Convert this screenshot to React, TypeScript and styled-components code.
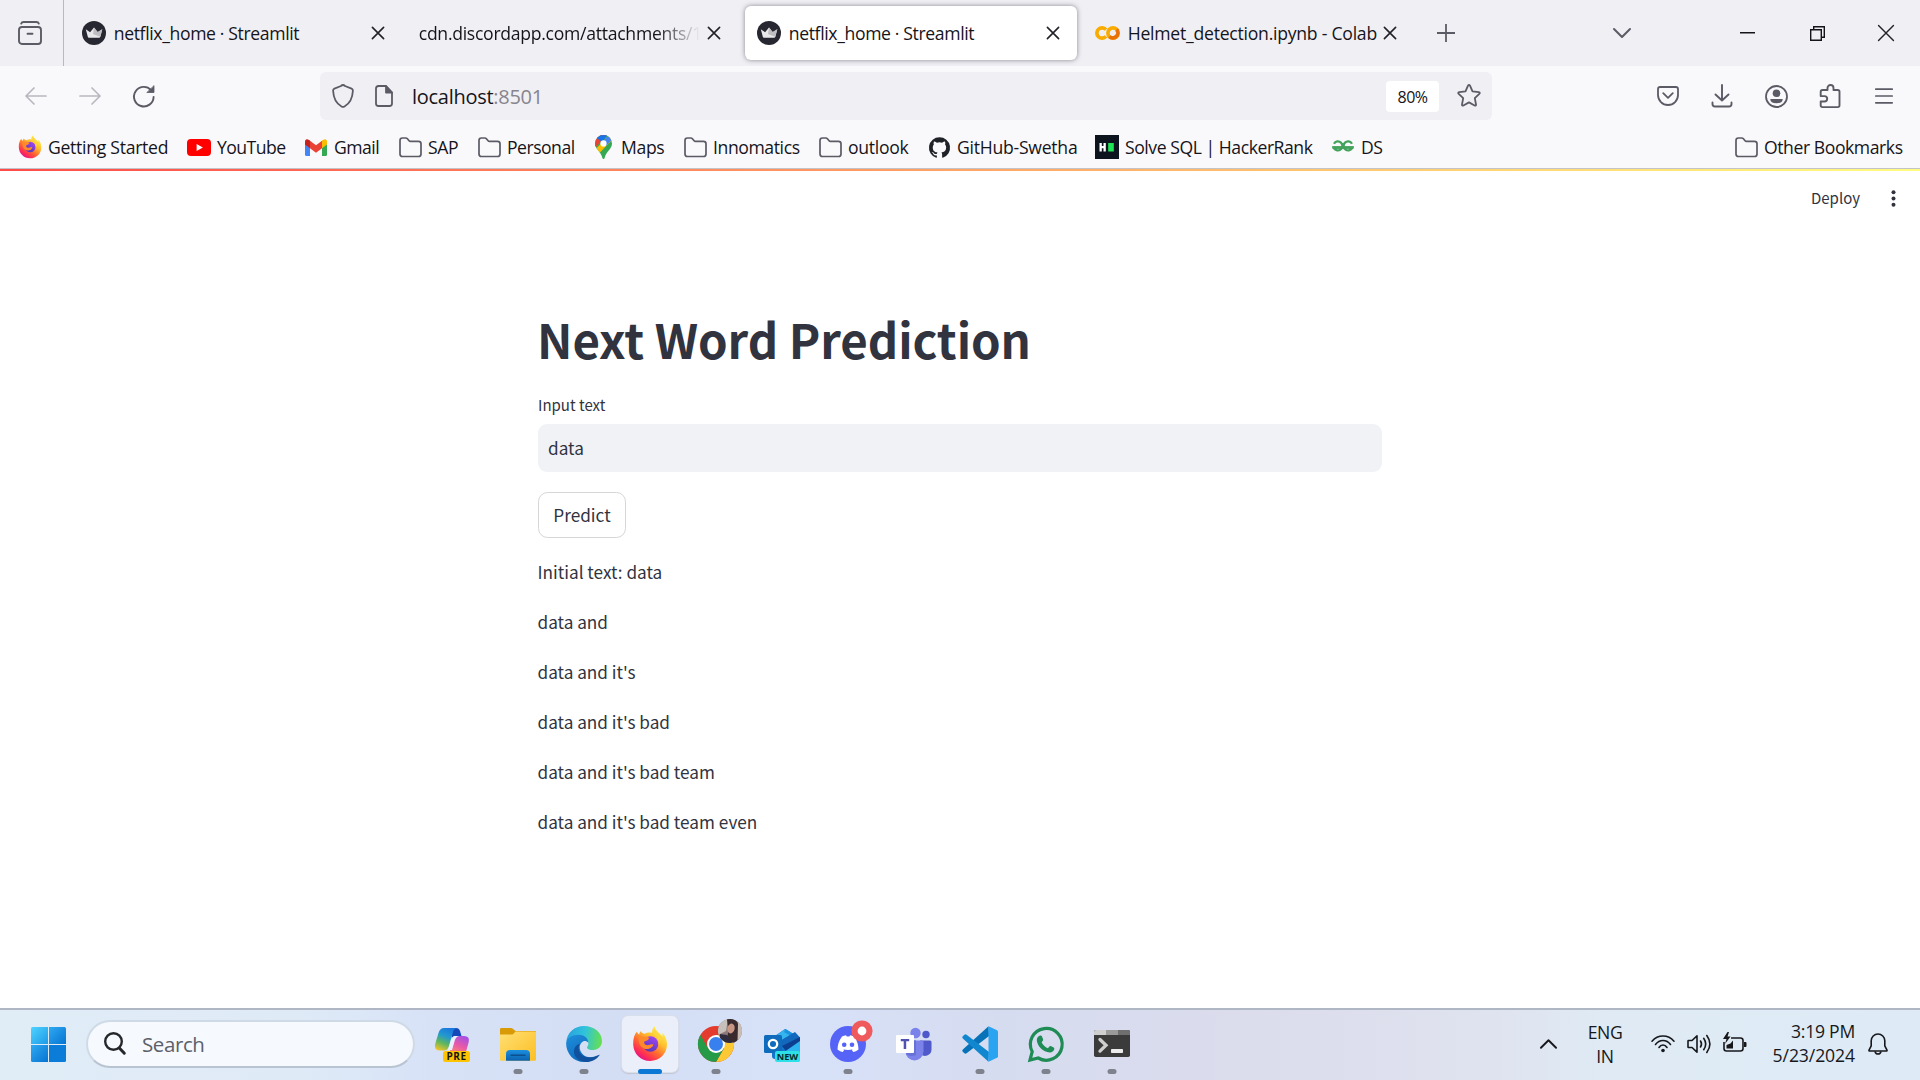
import React from "react";
import styled, { createGlobalStyle, css } from "styled-components";

const Global = createGlobalStyle`
  *, *::before, *::after { box-sizing: border-box; }
  html, body { margin: 0; padding: 0; width: 1920px; height: 1080px; overflow: hidden; background: #fff; }
  svg { display: block; flex: none; overflow: visible; }
`;

const ui = `"Open Sans", "Noto Sans", sans-serif`;
const source = `"Noto Sans CJK SC", "Noto Sans", sans-serif`;

const Screen = styled.div`
  display: flex;
  flex-direction: column;
  width: 1920px;
  height: 1080px;
  overflow: hidden;
  background: #fff;
  font-family: ${ui};
  font-size: 18px;
  color: #15141a;
`;

/* ---------- text ---------- */
const Label = styled.span<{ $track?: number; $size?: number }>`
  font-size: ${(p) => p.$size ?? 17.6}px;
  letter-spacing: ${(p) => p.$track ?? -0.4}px;
  line-height: 24px;
  white-space: nowrap;
`;

/* ---------- tab strip ---------- */
const TabStrip = styled.header`
  display: flex;
  align-items: center;
  height: 66px;
  flex: none;
  background: #f0eff4;
`;
const ViewButton = styled.div`
  display: flex;
  align-items: center;
  width: 64px;
  height: 66px;
  padding-left: 18px;
  border-right: 1px solid #b9b8bf;
`;
const Tab = styled.div<{ $w: number; $ml: number; $active?: boolean; $pr?: number }>`
  display: flex;
  align-items: center;
  gap: 8px;
  flex: none;
  width: ${(p) => p.$w}px;
  height: 54px;
  margin-left: ${(p) => p.$ml}px;
  padding: 0 ${(p) => p.$pr ?? 16}px 0 12px;
  border-radius: 6px;
  ${(p) =>
    p.$active &&
    css`
      background: #fff;
      box-shadow: 0 0 5px rgba(50, 50, 60, 0.55);
    `}
`;
const TabTitle = styled.div<{ $fade?: boolean }>`
  flex: 1;
  display: flex;
  min-width: 0;
  ${(p) =>
    p.$fade &&
    css`
      mask-image: linear-gradient(to right, #000 calc(100% - 44px), transparent 100%);
    `}
`;
const StripButton = styled.div<{ $w: number; $ml?: number }>`
  display: flex;
  justify-content: center;
  align-items: center;
  width: ${(p) => p.$w}px;
  height: 66px;
  margin-left: ${(p) => p.$ml ?? 0}px;
`;

/* ---------- navigation ---------- */
const NavBar = styled.div`
  display: flex;
  align-items: center;
  flex: none;
  height: 60px;
  padding: 0 9px 0 9px;
  background: #f9f9fb;
`;
const NavButton = styled.div`
  display: flex;
  justify-content: center;
  align-items: center;
  width: 54px;
  height: 48px;
`;
const UrlBar = styled.div`
  display: flex;
  align-items: center;
  width: 1172px;
  height: 48px;
  margin-left: 149px;
  padding: 0 11px 0 10px;
  border-radius: 6px;
  background: #f0eff4;
`;
const UrlIcon = styled.div<{ $w: number }>`
  display: flex;
  justify-content: center;
  width: ${(p) => p.$w}px;
`;
const Url = styled.div`
  flex: 1;
  padding-top: 2px;
  font-size: 20px;
  letter-spacing: -0.28px;
  line-height: 28px;
  white-space: nowrap;
`;
const Dim = styled.span`
  color: #86858c;
`;
const ZoomBadge = styled.div`
  display: flex;
  align-items: center;
  justify-content: center;
  width: 53px;
  height: 31px;
  padding-top: 1px;
  margin-right: 18px;
  border-radius: 4px;
  background: #fff;
`;
const NavRight = styled.div`
  display: flex;
  margin-left: auto;
`;

/* ---------- bookmarks ---------- */
const Bookmarks = styled.div`
  display: flex;
  align-items: center;
  flex: none;
  height: 42px;
  padding: 0 0 0 18px;
  background: #f9f9fb;
`;
const Bookmark = styled.div<{ $w: number }>`
  display: flex;
  align-items: center;
  gap: 6px;
  flex: none;
  width: ${(p) => p.$w}px;
`;
const IconBox = styled.div`
  display: flex;
  justify-content: center;
  align-items: center;
  flex: none;
  width: 24px;
  height: 24px;
`;

/* ---------- page ---------- */
const Page = styled.main`
  display: flex;
  flex-direction: column;
  flex: 1;
  border-top: 1px solid #c4c4c8;
  font-family: ${source};
  color: #31333f;
  background: #fff;
`;
const Decoration = styled.div`
  height: 2px;
  flex: none;
  background: linear-gradient(90deg, #ff4b4b, #fffd80);
`;
const PageHeader = styled.div`
  display: flex;
  justify-content: flex-end;
  align-items: center;
  gap: 31px;
  height: 54px;
  padding-right: 24px;
  font-size: 15px;
  line-height: 24px;
`;
const Content = styled.section`
  display: flex;
  flex-direction: column;
  align-items: flex-start;
  width: 844px;
  margin: 0 auto;
  padding-top: 82px;
`;
const Title = styled.h1`
  margin: 0;
  height: 64px;
  font-size: 47.4px;
  font-weight: 700;
  letter-spacing: -0.08px;
  line-height: 64px;
  text-indent: -1px;
  white-space: nowrap;
`;
const FieldLabel = styled.label`
  margin-top: 22px;
  height: 31px;
  font-size: 15px;
  line-height: 24px;
`;
const Field = styled.div`
  display: flex;
  align-items: center;
  align-self: stretch;
  height: 48px;
  padding: 0 10px 1px;
  border-radius: 9px;
  background: #f0f2f6;
  font-size: 17.2px;
`;
const Button = styled.button`
  width: 88px;
  height: 46px;
  margin: 20px 0 18px;
  padding: 0 0 1px;
  border: 1px solid #d6d6d8;
  border-radius: 9.6px;
  background: #fff;
  color: inherit;
  font-family: inherit;
  font-size: 17.2px;
`;
const Lines = styled.div`
  display: flex;
  flex-direction: column;
  gap: 19px;
`;
const Line = styled.p`
  margin: 0;
  font-size: 17.2px;
  line-height: 31px;
  text-indent: -0.5px;
`;

/* ---------- taskbar ---------- */
const Taskbar = styled.footer`
  display: flex;
  align-items: center;
  flex: none;
  height: 72px;
  padding-bottom: 2px;
  border-top: 2px solid #afb7c4;
  background: linear-gradient(90deg, #e0ecf6 0, #dfeaf7 300px, #d7e2f7 430px, #d3ddf3 620px, #d7e2f9 780px, #d6dcf0 1000px, #dbdcec 1250px, #dfe2ef 1480px, #dfeaf4 1600px, #deebf6 1920px);
`;
const Start = styled.div`
  margin-left: 31px;
`;
const SearchBox = styled.div`
  display: flex;
  align-items: center;
  width: 329px;
  height: 48px;
  margin-left: 20px;
  padding-left: 16px;
  padding-bottom: 1px;
  border: 2px solid #cfdae7;
  border-bottom-color: #b9c4d2;
  border-radius: 24px;
  background: #f6f9fd;
  color: #5c6068;
  gap: 16px;
`;
const Apps = styled.div`
  display: flex;
  gap: 10px;
  margin-left: 9px;
`;
const AppButton = styled.div<{ $active?: boolean }>`
  position: relative;
  display: flex;
  justify-content: center;
  align-items: center;
  width: 56px;
  height: 56px;
  border-radius: 6px;
  ${(p) =>
    p.$active &&
    css`
      background: #ebeffa;
      box-shadow: 0 0 0 1px #d9deeb, 0 1px 1px 1px #bfc6d6;
    `}
`;
const Indicator = styled.div<{ $active?: boolean }>`
  position: absolute;
  bottom: -2px;
  left: 50%;
  transform: translateX(-50%);
  width: ${(p) => (p.$active ? 24 : 9)}px;
  height: 5px;
  border-radius: 2.5px;
  background: ${(p) => (p.$active ? "#0a78d4" : "#7e828c")};
`;
const Tray = styled.div`
  display: flex;
  align-items: center;
  margin-left: auto;
  padding-right: 32px;
  color: #17181b;
`;
const Stack = styled.div<{ $align: string; $w: number; $ml: number; $pb?: number }>`
  display: flex;
  flex-direction: column;
  align-items: ${(p) => p.$align};
  width: ${(p) => p.$w}px;
  margin-left: ${(p) => p.$ml}px;
  padding-bottom: ${(p) => p.$pb ?? 0}px;
`;
const TrayIcons = styled.div`
  display: flex;
  gap: 12px;
  margin-left: 22px;
`;

/* ---------- small icons ---------- */
const ink = "#5b5b66";

const CloseX = ({ s = 12, w = 1.6, c = "#222127" }: { s?: number; w?: number; c?: string }) => (
  <svg width={s} height={s} viewBox="0 0 12 12" stroke={c} strokeWidth={(w * 12) / s} strokeLinecap="round">
    <path d="M.4.4l11.2 11.2M11.6.4L.4 11.6" />
  </svg>
);
const Streamlit = () => (
  <svg width="24" height="24" viewBox="0 0 24 24">
    <circle cx="12" cy="12" r="12" fill="#262730" />
    <path d="M3.8 8.2l4.3 3L12 6.6l3.8 4.6 4.5-3-2 7.6q-.2.9-1.200.9H7q-1 0-1.200-.9z" fill="#e9e9eb" />
    <path d="M12 6.600l3.800 4.600-4.800 2zM20.300 8.200l-2 7.600-7-2.600z" fill="#bdbdc2" />
  </svg>
);
const Folder = () => (
  <svg width="23" height="21" viewBox="0 0 23 21" fill="none" stroke={ink} strokeWidth="1.7" strokeLinejoin="round">
    <path d="M1 17V3.400Q1 1 3.400 1h3.400q1 0 1.600.7l1.700 2q.5.700 1.400.7h8q2.500 0 2.500 2.400V17q0 2.500-2.500 2.500h-16Q1 19.500 1 17z" />
  </svg>
);
const Firefox = ({ s, id }: { s: number; id: string }) => (
  <svg width={s} height={s} viewBox="0 0 36 36">
    <defs>
      <linearGradient id={id + "a"} x1=".85" y1=".1" x2=".25" y2=".95">
        <stop offset="0" stopColor="#fff44f" />
        <stop offset=".35" stopColor="#ffbd2e" />
        <stop offset=".62" stopColor="#ff6b30" />
        <stop offset=".85" stopColor="#ff2e53" />
        <stop offset="1" stopColor="#e31587" />
      </linearGradient>
      <linearGradient id={id + "b"} x1=".8" y1="0" x2=".3" y2="1">
        <stop offset="0" stopColor="#a246f5" />
        <stop offset="1" stopColor="#5537b8" />
      </linearGradient>
    </defs>
    <path d="M22.600.3c-2 2-2.700 4-2.500 6.500-3-.7-5.500-.2-7.500 1-1.700-.4-3-1.100-3.600-2.600-1.200.7-1.700 1.900-1.700 3.400C6 8 5.200 6.900 5 5.500 2.500 8 1 12.500 1.200 18.500 1.500 28 8.800 35 18.100 35S35 27.800 35 18.600c0-5-1.700-9.200-4.800-11.900.4 1.400.4 2.500.2 3.700C28 6.900 23.300 5.500 22.600.3z" fill={`url(#${id}a)`} />
    <circle cx="18.500" cy="18" r="7.800" fill={`url(#${id}b)`} />
    <path d="M6.800 10c3 .5 6.700 0 10.500 1.800-.6 2.600-3.200 3.200-5.200 3.900-.2 2.500 2 3.900 4.600 3.300 2-.5 3-1.400 4.900-.4-1.500 3.500-4.700 5-8 4.300C9 22 5.800 17.500 6.800 10z" fill="#ff8a2c" />
    <path d="M20 6.800c4 2 7.400 6.200 6.500 12 2.800-2.500 2.900-6.500 1.500-9.600L22.600 3z" fill="#ffd53e" opacity=".85" />
  </svg>
);
const Colab = () => (
  <svg width="25" height="14" viewBox="0 0 25 14" fill="none" strokeWidth="3.700">
    <path d="M11 3.600A5.200 5.200 0 1 0 11 10.400" stroke="#f9ab00" />
    <circle cx="18" cy="7" r="5.100" stroke="#f9ab00" />
    <path d="M14.400 10.600A5.100 5.100 0 0 0 21.600 3.400" stroke="#e8710a" />
  </svg>
);
const YouTube = () => (
  <svg width="24" height="17" viewBox="0 0 24 17">
    <rect width="24" height="17" rx="4" fill="#f00" />
    <path d="M9.600 4.900v7.200l6.300-3.600z" fill="#fff" />
  </svg>
);
const Gmail = () => (
  <svg width="22" height="17" viewBox="0 0 22 17">
    <path d="M0 3v12.500Q0 17 1.500 17H5V6.500z" fill="#4285f4" />
    <path d="M22 3v12.500q0 1.500-1.500 1.500H17V6.500z" fill="#34a853" />
    <path d="M17 1.500l2-1.100Q22-.4 22 3v2.400l-5 3.800z" fill="#fbbc04" />
    <path d="M5 1.500L3 .4Q0-.4 0 3v2.400l5 3.800z" fill="#c5221f" />
    <path d="M5 1.700l6 4.500 6-4.500v7.500l-6 4.600-6-4.600z" fill="#ea4335" />
  </svg>
);
const Maps = () => (
  <svg width="17" height="24" viewBox="0 0 17 24">
    <defs>
      <clipPath id="pin">
        <path d="M8.500 0A8.500 8.500 0 0 1 17 8.500c0 5.500-5.700 7.500-7.400 14.500q-.2 1-1.100 1t-1.100-1C5.700 16 0 14 0 8.500A8.500 8.500 0 0 1 8.500 0z" />
      </clipPath>
    </defs>
    <g clipPath="url(#pin)">
      <path d="M0 0h17v24H0z" fill="#34a853" />
      <path d="M-1 14L12 0H-1z" fill="#ea4335" />
      <path d="M1 13.800L15 -1l3 5L4 18.500z" fill="#fbbc04" />
      <path d="M7.500 7.500L14-1l3.500 5-6 6.500z" fill="#4285f4" />
      <path d="M1.800 3L7 7.300 13-1H3z" fill="#1a73e8" />
    </g>
    <circle cx="8.500" cy="8.400" r="3.100" fill="#fff" />
  </svg>
);
const GitHub = () => (
  <svg width="21" height="21" viewBox="0 0 24 24" fill="#1f2328">
    <path d="M12 .3a12 12 0 0 0-3.800 23.400c.6.100.8-.3.800-.6v-2c-3.300.7-4-1.600-4-1.600-.6-1.400-1.400-1.800-1.400-1.800-1-.7.1-.7.1-.7 1.200 0 1.900 1.200 1.900 1.200 1 1.800 2.800 1.300 3.500 1 0-.8.400-1.300.7-1.600-2.700-.3-5.500-1.300-5.500-6 0-1.200.5-2.300 1.300-3.100-.2-.400-.6-1.600 0-3.200 0 0 1-.3 3.400 1.200a11.500 11.500 0 0 1 6 0c2.300-1.500 3.300-1.200 3.300-1.200.6 1.600.2 2.800 0 3.200.9.800 1.300 1.900 1.300 3.200 0 4.600-2.800 5.600-5.500 5.900.5.400.9 1 .9 2.200v3.300c0 .3.100.7.800.6A12 12 0 0 0 12 .3" />
  </svg>
);
const HackerRank = () => (
  <svg width="24" height="24" viewBox="0 0 24 24">
    <path d="M0 0h24v24H0z" fill="#0e141e" />
    <path d="M4.500 8h2.300v2.900h1.700V8h2.300v8.500H8.500v-3.200H6.800v3.200H4.500z" fill="#fff" />
    <path d="M13.200 8h5.600v8.500h-5.600z" fill="#1ee655" />
  </svg>
);
const Geeks = () => (
  <svg width="22" height="12" viewBox="0 0 22 12" fill="none" stroke="#43a25c" strokeWidth="2.300">
    <path d="M2 2.700A4.500 4.500 0 1 1 1.700 6.500H20.300A4.500 4.500 0 1 1 20 2.700" />
    <path d="M.3 6.500h21.400" />
  </svg>
);

const ViewIcon = () => (
  <svg width="24" height="24" viewBox="0 0 24 24" fill="none" stroke={ink} strokeWidth="1.900" strokeLinecap="round">
    <path d="M3.200 2.600Q3.800 1 5.500 1h13q1.700 0 2.300 1.600" />
    <rect x="1" y="6" width="22" height="17" rx="3" />
    <path d="M9.500 12.800h5" />
  </svg>
);
const Arrow = ({ flip }: { flip?: boolean }) => (
  <svg width="22" height="18" viewBox="0 0 22 18" fill="none" stroke="#b8b8be" strokeWidth="1.700" strokeLinecap="round" strokeLinejoin="round">
    <path d={flip ? "M1 9h20M13 1l8 8-8 8" : "M21 9H1M9 1L1 9l8 8"} />
  </svg>
);
const Reload = () => (
  <svg width="22" height="22" viewBox="0 0 22 22" fill="none" stroke={ink} strokeWidth="1.900" strokeLinecap="round">
    <path d="M20.600 12A9.800 9.800 0 1 1 18 5" />
    <path d="M21 1v6.500h-6.800z" fill={ink} strokeWidth=".8" strokeLinejoin="round" />
  </svg>
);
const Shield = () => (
  <svg width="22" height="24" viewBox="0 0 22 24" fill="none" stroke={ink} strokeWidth="1.800" strokeLinejoin="round">
    <path d="M11 1Q12 1 13 2l6.600 2.700q1.400.6 1.300 2.100C20.500 14 18 19.500 12.500 22.500q-1.500.8-3 0C4 19.500 1.500 14 1.100 6.800Q1 5.300 2.400 4.700L9 2Q10 1 11 1z" />
  </svg>
);
const PageIcon = () => (
  <svg width="18" height="22" viewBox="0 0 18 22" fill="none" stroke={ink} strokeWidth="1.800" strokeLinejoin="round">
    <path d="M11 1H3.500Q1 1 1 3.500v15Q1 21 3.500 21h11q2.500 0 2.500-2.500V7.500z" />
    <path d="M11 1v6.500h6z" fill={ink} />
  </svg>
);
const Star = () => (
  <svg width="24" height="24" viewBox="0 0 24 24" fill="none" stroke={ink} strokeWidth="1.800" strokeLinejoin="round">
    <path d="M11 1.700q1-1.500 2 0l2.500 5.700 6.300.8q1.700.4.500 1.700l-4.500 4.300 1.200 6.300q.1 1.700-1.400 1L12 18.400l-5.600 3.100q-1.500.7-1.400-1l1.200-6.300L1.700 9.900Q.5 8.600 2.200 8.200l6.300-.8z" />
  </svg>
);
const Pocket = () => (
  <svg width="22" height="20" viewBox="0 0 22 20" fill="none" stroke={ink} strokeWidth="1.800" strokeLinecap="round" strokeLinejoin="round">
    <path d="M3.200 1h15.600Q21 1 21 3.200V9a10 10 0 0 1-20 0V3.200Q1 1 3.200 1z" />
    <path d="M6.200 7.200L11 11.800l4.800-4.600" />
  </svg>
);
const Download = () => (
  <svg width="22" height="23" viewBox="0 0 22 23" fill="none" stroke={ink} strokeWidth="1.900" strokeLinecap="round" strokeLinejoin="round">
    <path d="M11 0v15M4.500 9.500L11 15.500 17.500 9.500M1.500 17.500v1.500q0 2.500 2.500 2.500h14q2.500 0 2.500-2.500v-1.500" />
  </svg>
);
const Account = () => (
  <svg width="24" height="24" viewBox="0 0 24 24">
    <circle cx="12.500" cy="12.500" r="10.500" fill="none" stroke={ink} strokeWidth="1.800" />
    <circle cx="12.500" cy="9.300" r="3.800" fill={ink} />
    <path d="M6.300 15h12.400q0 4.300-6.200 4.300t-6.200-4.300z" fill={ink} />
  </svg>
);
const Puzzle = () => (
  <svg width="22" height="25" viewBox="0 0 22 25" fill="none" stroke={ink} strokeWidth="1.900" strokeLinejoin="round">
    <path d="M8.500 6V4a3 3 0 0 1 6 0v2h4.200Q20.500 6 20.500 7.800v13.500q0 1.800-1.800 1.800H3.500q-1.800 0-1.800-1.800V17.500h3.800a2.700 2.700 0 0 0 0-5.400H1.700V7.800Q1.700 6 3.500 6z" />
  </svg>
);
const Burger = () => (
  <svg width="18" height="16" viewBox="0 0 18 16" stroke={ink} strokeWidth="1.700" strokeLinecap="round">
    <path d="M.8 1.200h16.400M.8 8h16.400M.8 14.800h16.400" />
  </svg>
);
const Chevron = ({ up, w, h, c }: { up?: boolean; w: number; h: number; c: string }) => (
  <svg width={w} height={h} viewBox="0 0 18 10" fill="none" stroke={c} strokeWidth="2" strokeLinecap="round" strokeLinejoin="round">
    <path d={up ? "M1 9l8-8 8 8" : "M1 1l8 8 8-8"} />
  </svg>
);

/* ---------- taskbar icons ---------- */
const Windows = () => (
  <svg width="35" height="35" viewBox="0 0 35 35">
    <defs>
      <linearGradient id="win" x1="0" y1="0" x2="1" y2="1">
        <stop offset="0" stopColor="#4fd3ff" />
        <stop offset="1" stopColor="#1d9be8" />
      </linearGradient>
      <linearGradient id="win2" x1="0" y1="0" x2="1" y2="1">
        <stop offset="0" stopColor="#2fa9f1" />
        <stop offset="1" stopColor="#0674d2" />
      </linearGradient>
    </defs>
    <path d="M1.500 0H17v17H0V1.500Q0 0 1.500 0z" fill="url(#win)" />
    <path d="M18 0h15.500Q35 0 35 1.500V17H18z" fill="url(#win2)" />
    <path d="M0 18h17v17H1.500Q0 35 0 33.500z" fill="url(#win2)" />
    <path d="M18 18h17v15.500q0 1.500-1.500 1.500H18z" fill="#0b7dd9" />
  </svg>
);
const SearchIcon = () => (
  <svg width="22" height="23" viewBox="0 0 22 23" fill="none" stroke="#26272a" strokeLinecap="round">
    <circle cx="9.500" cy="9.500" r="8.300" strokeWidth="2.400" />
    <path d="M15.300 16l5 5.200" strokeWidth="3" />
  </svg>
);
const Copilot = () => (
  <svg width="36" height="36" viewBox="0 0 36 36">
    <defs>
      <linearGradient id="cp1" x1=".6" y1="0" x2=".2" y2="1">
        <stop offset="0" stopColor="#1b78dd" />
        <stop offset=".35" stopColor="#2399cf" />
        <stop offset=".65" stopColor="#5cb661" />
        <stop offset="1" stopColor="#f1c526" />
      </linearGradient>
      <linearGradient id="cp2" x1=".8" y1="0" x2=".3" y2="1">
        <stop offset="0" stopColor="#a350e6" />
        <stop offset=".5" stopColor="#e95aa6" />
        <stop offset="1" stopColor="#ff9264" />
      </linearGradient>
    </defs>
    <path d="M17 2h5q3 0 4 3l1.500 5H22q-3 0-4 3z" fill="#1548b8" />
    <path d="M10 2h13q-3 .5-4 4l-4 14q-1.300 4.500-5 4.500H6q-6 0-5-6L4.500 7Q6 2 10 2z" fill="url(#cp1)" />
    <path d="M24 10h6q6 0 4.700 6l-2.500 9q-1 4-5 4H12q3-.500 4-4l3-11q1-4 5-4z" fill="url(#cp2)" />
    <path d="M20 10h5q-3 .5-4.200 4.500L18 24h-4l3-10q.8-3 3-4z" fill="#e9f0ff" />
    <rect x="9" y="25" width="27" height="11" rx="2.500" fill="#ffc400" />
    <text x="22.500" y="34" textAnchor="middle" fontFamily="Open Sans" fontWeight="700" fontSize="10" letterSpacing=".5" fill="#17130a">PRE</text>
  </svg>
);
const Explorer = () => (
  <svg width="36" height="36" viewBox="0 0 36 36">
    <defs>
      <linearGradient id="ex1" x1="0" y1="0" x2="1" y2="1">
        <stop offset="0" stopColor="#ffdf75" />
        <stop offset="1" stopColor="#fcbf22" />
      </linearGradient>
      <linearGradient id="ex2" x1="0" y1="0" x2="0" y2="1">
        <stop offset="0" stopColor="#1c8fe0" />
        <stop offset="1" stopColor="#0b62b0" />
      </linearGradient>
    </defs>
    <path d="M0 3.300Q0 2 1.300 2H11q1 0 1.800.7L15.500 5H35q1 0 1 1v6H0z" fill="#d99a08" />
    <path d="M0 8.500h11.500q1 0 1.700-.6L15.600 5.500H35q1 0 1 1v27q0 1.200-1.200 1.200H1.200Q0 34.700 0 33.500z" fill="url(#ex1)" />
    <path d="M6 34.700V28q0-4 4-4h16q4 0 4 4v6.700z" fill="url(#ex2)" />
    <path d="M11 29.300h14" stroke="#0c4f8f" strokeWidth="1.400" strokeLinecap="round" />
  </svg>
);
const Edge = () => (
  <svg width="36" height="36" viewBox="0 0 36 36">
    <defs>
      <linearGradient id="ed1" x1="0" y1=".4" x2="1" y2=".5">
        <stop offset="0" stopColor="#2aa0dc" />
        <stop offset=".5" stopColor="#2fc3dc" />
        <stop offset="1" stopColor="#66e04f" />
      </linearGradient>
      <linearGradient id="ed2" x1="0" y1="0" x2=".6" y2="1">
        <stop offset="0" stopColor="#1f8fdc" />
        <stop offset="1" stopColor="#0d66b8" />
      </linearGradient>
    </defs>
    <path d="M.3 16C1 6.500 8.500 0 18 0c10 0 18 6.500 18 15 0 5.500-4 9-8.700 9-3.800 0-6.300-1.200-6.300-2.600 0-.9 1.400-1.500 1.400-4C22.400 13.500 18.500 10 13 10 7 10 2 12.500.3 16z" fill="url(#ed1)" />
    <path d="M.1 17C1 11.500 6.500 8.800 12.500 8.800c5.500 0 9.600 3 9.900 8-1.400-1.600-3.400-2.300-5.400-1.300-4 2-4.500 8-.5 12.500 3.500 4 10 4 15.500 1.200C28.500 33.500 23.500 36 18 36 8 36 0 28 .1 17z" fill="url(#ed2)" />
    <path d="M13.800 17.500c-3.500 7 1.200 14 9.700 14 4 0 7.200-1.200 9.700-2.700q.7-.4.300.4C30.500 33.500 25.500 36 20.500 36c-8-.5-13-5.500-12.500-11.500.3-3 2.500-5.800 5.800-7z" fill="#10509c" />
  </svg>
);
const Chrome = () => (
  <svg width="44" height="44" viewBox="0 0 44 44">
    <defs>
      <clipPath id="avatar"><circle cx="32" cy="13" r="12" /></clipPath>
    </defs>
    <g transform="translate(0 8)">
      <circle cx="18" cy="18" r="18" fill="#e33b2e" />
      <path d="M18 9H33.600A18 18 0 0 1 18 36L25.800 22.500z" fill="#fcc934" />
      <path d="M10.200 22.500L2.400 9A18 18 0 0 0 18 36L25.800 22.500z" fill="#259b48" />
      <circle cx="18" cy="18" r="9" fill="#fff" />
      <circle cx="18" cy="18" r="7" fill="#3880ee" />
    </g>
    <g clipPath="url(#avatar)">
      <g transform="translate(0 2)">
        <path d="M20-1h24v24H20z" fill="#8d7b7b" />
        <path d="M20-1h10l-2 12-8 4z" fill="#c7c0ba" />
        <path d="M29-1q8-3 11 5l-1 20-12-4q5-4 2-20z" fill="#3a2a2e" />
        <ellipse cx="33" cy="8.500" rx="3.600" ry="5" fill="#c79582" transform="rotate(15 33 8.500)" />
        <path d="M22 14l7 1 5 8H22z" fill="#2f2d3d" />
        <path d="M40 2l4 2v14l-4 2z" fill="#c9bdb6" />
      </g>
    </g>
  </svg>
);
const Outlook = () => (
  <svg width="36" height="36" viewBox="0 0 36 36">
    <path d="M8 12L21 3l15 9v18q0 3-3 3H11q-3 0-3-3z" fill="#1276cf" />
    <path d="M9 11.500L21.500 3 35 11.500 22 20z" fill="#36b4ee" />
    <path d="M21.500 3L36 12v3L20 6z" fill="#1c93df" />
    <path d="M14 16L31 6l5 5.500L19 22z" fill="#1268bd" />
    <path d="M18 20l18-9v6L22 25z" fill="#0c3f8f" />
    <path d="M36 15v18q0 3-3 3H18l-5-5z" fill="#2cb3f0" />
    <rect x="0" y="9" width="18" height="18" rx="1.500" fill="#0f6cbd" />
    <circle cx="9" cy="18" r="4.200" fill="none" stroke="#fff" strokeWidth="2.300" />
    <rect x="11" y="25" width="25" height="11" rx="2" fill="#2be0e6" />
    <text x="23.500" y="33.800" textAnchor="middle" fontFamily="Open Sans" fontWeight="700" fontSize="9.200" fill="#062a2d">NEW</text>
  </svg>
);
const Discord = () => (
  <svg width="44" height="44" viewBox="0 0 44 44">
    <g transform="translate(0 2)">
      <circle cx="18" cy="24" r="18" fill="#5663f7" />
      <path d="M12 16.500q2-1 4-1.200l.8 1.300h2.600l.8-1.300q2 .2 4 1.200 4.200 6 4.300 13-2.500 2-5.300 2.600l-1.500-2.300 1.500-.9q-5.200 2-10.400 0l1.500.9-1.500 2.300q-2.800-.6-5.300-2.600.1-7 4.500-13z" fill="#fff" />
      <circle cx="14.200" cy="24.800" r="2.300" fill="#5663f7" />
      <circle cx="22" cy="24.800" r="2.300" fill="#5663f7" />
    </g>
    <circle cx="32" cy="13" r="10.600" fill="#ef5a5c" />
    <circle cx="32" cy="13" r="4.400" fill="#fff" />
  </svg>
);
const Teams = () => (
  <svg width="36" height="36" viewBox="0 0 36 36">
    <circle cx="30" cy="8.500" r="3.700" fill="#5059c9" />
    <path d="M24 14.500h10q1.500 0 1.500 1.500v7.500a6.500 6.500 0 0 1-11.500 4z" fill="#5059c9" />
    <circle cx="19.500" cy="7" r="5.200" fill="#7b83eb" />
    <path d="M12 14.500h14q1.500 0 1.500 1.500v9.500a9 9 0 0 1-18 0V14.500z" fill="#7b83eb" />
    <path d="M10 14h10v15q-5 2-9.500-.5z" fill="#5a62c4" opacity=".55" />
    <rect x="0" y="9" width="18" height="18" rx="1" fill="#fff" />
    <path d="M4.800 13h8.400v2.200h-3V23H7.700v-7.800H4.800z" fill="#4f52b2" />
  </svg>
);
const VSCode = () => (
  <svg width="36" height="36" viewBox="0 0 36 36">
    <path d="M26.500.3L.8 23.500q-1.200 1.200 0 2.300l1.600 1.500q1 .8 2.200 0L27 10z" fill="#0872b8" />
    <path d="M26.500 35.700L.8 12.500q-1.200-1.200 0-2.300l1.600-1.500q1-.8 2.200 0L27 26z" fill="#1187cf" />
    <path d="M26.500.3L35 4.200q1 .5 1 1.600v24.400q0 1.100-1 1.600l-8.500 3.900z" fill="#29a4f0" />
  </svg>
);
const WhatsApp = () => (
  <svg width="36" height="36" viewBox="0 0 36 36">
    <path d="M2 34l2.200-8.300A15.900 15.900 0 1 1 10.200 32z" fill="none" stroke="#1f8b55" strokeWidth="3.200" strokeLinejoin="miter" />
    <path d="M12 9.500c.8-.3 1.600 0 1.900.8l1.200 2.900q.3.800-.3 1.500l-1.200 1.500c1.400 2.900 3.300 4.700 6.300 6l1.500-1.800q.6-.6 1.300-.3l3 1.500q.9.500.6 1.500c-.6 2.200-2.400 3.500-4.600 3.400-6.500-.6-12.300-6.200-12.900-12.300 0-2.200 1.300-4.100 3.200-4.700z" fill="#1f8b55" />
  </svg>
);
const Terminal = () => (
  <svg width="36" height="36" viewBox="0 0 36 36">
    <rect x="0" y="4" width="36" height="27" rx="1.800" fill="#3b3b3b" />
    <path d="M0 9V5.800Q0 4 1.800 4H12v5z" fill="#cfcfcf" />
    <path d="M12 4h12v5H12z" fill="#9a9a9a" />
    <path d="M24 4h10.200Q36 4 36 5.800V9H24z" fill="#6f6f6f" />
    <path d="M6 13.500l6 5.800-6 5.800" fill="none" stroke="#cfcfcf" strokeWidth="3.300" strokeLinecap="round" />
    <rect x="17" y="23" width="12" height="4" rx=".8" fill="#ececec" />
  </svg>
);
const Wifi = () => (
  <svg width="24" height="20" viewBox="0 0 24 20" fill="none" stroke="#17181b" strokeWidth="1.600" strokeLinecap="round">
    <path d="M1 7.200Q5.500 2 12 2t11 5.200M4.500 10.500Q7.500 6.500 12 6.500t7.500 4M8 13.500Q9.500 11 12 11t4 2.500" />
    <circle cx="12" cy="16.500" r="1.800" fill="#17181b" stroke="none" />
  </svg>
);
const Speaker = () => (
  <svg width="24" height="20" viewBox="0 0 24 20" fill="none" stroke="#17181b" strokeWidth="1.600" strokeLinecap="round" strokeLinejoin="round">
    <path d="M1 7q0-.5.500-.5h3.500l5-4.700v16.400l-5-4.700H1.500Q1 13.500 1 13z" />
    <path d="M13.500 7q2 3 0 6M16.700 4.300q4 5.700 0 11.400M19.800 1.500q6.200 8.500 0 17" />
  </svg>
);
const Battery = () => (
  <svg width="24" height="20" viewBox="0 0 24 20" fill="none" stroke="#17181b" strokeWidth="1.600">
    <path d="M8 4h9.500Q20 4 20 6.500v8q0 2.500-2.500 2.500H3.500Q1 17 1 14.500V8" />
    <path d="M21 8h1.500q1 0 1 1v3q0 1-1 1H21z" fill="#17181b" stroke="none" />
    <path d="M3.500 14.500V11l4-1.500L10 6.500v8zM4.500-2L0 5h3.500L2 10l5.500-7.500H4.500L6-2z" fill="#17181b" stroke="none" />
  </svg>
);
const Bell = () => (
  <svg width="20" height="22" viewBox="0 0 20 22" fill="none" stroke="#17181b" strokeWidth="1.600" strokeLinejoin="round">
    <path d="M10 1a6.800 6.800 0 0 1 6.800 6.800v5L19 17.200q.2.800-.6.800H1.600Q.8 18 1 17.200l2.200-4.400v-5A6.800 6.800 0 0 1 10 1z" />
    <path d="M7 18.500q.5 2.500 3 2.500t3-2.500" />
  </svg>
);

const bookmarks: { name: string; w: number; icon: React.ReactNode; track?: number }[] = [
  { name: "Getting Started", w: 169, icon: <Firefox s={24} id="fb" />, track: -0.28 },
  { name: "YouTube", w: 117, icon: <YouTube />, track: -0.55 },
  { name: "Gmail", w: 94, icon: <Gmail />, track: -0.5 },
  { name: "SAP", w: 79, icon: <Folder /> },
  { name: "Personal", w: 114, icon: <Folder />, track: -0.5 },
  { name: "Maps", w: 92, icon: <Maps />, track: -0.35 },
  { name: "Innomatics", w: 135, icon: <Folder /> },
  { name: "outlook", w: 109, icon: <Folder />, track: -0.3 },
  { name: "GitHub-Swetha", w: 168, icon: <GitHub />, track: -0.25 },
  { name: "Solve SQL | HackerRank", w: 236, icon: <HackerRank />, track: -0.45 },
  { name: "DS", w: 403, icon: <Geeks /> },
  { name: "Other Bookmarks", w: 175, icon: <Folder />, track: -0.43 },
];

const apps: { key: string; icon: React.ReactNode; state?: "open" | "active" }[] = [
  { key: "copilot", icon: <Copilot /> },
  { key: "explorer", icon: <Explorer />, state: "open" },
  { key: "edge", icon: <Edge />, state: "open" },
  { key: "firefox", icon: <Firefox s={36} id="ft" />, state: "active" },
  { key: "chrome", icon: <Chrome />, state: "open" },
  { key: "outlook", icon: <Outlook /> },
  { key: "discord", icon: <Discord />, state: "open" },
  { key: "teams", icon: <Teams /> },
  { key: "vscode", icon: <VSCode />, state: "open" },
  { key: "whatsapp", icon: <WhatsApp />, state: "open" },
  { key: "terminal", icon: <Terminal />, state: "open" },
];

/* Badged icons are larger than the 36px glyph and spill to the top right. */
const Badged = styled.div`
  width: 36px;
  height: 36px;
  display: flex;
  align-items: flex-end;
`;

const lines = [
  "Initial text: data",
  "data and",
  "data and it's",
  "data and it's bad",
  "data and it's bad team",
  "data and it's bad team even",
];

export default function App() {
  return (
    <Screen>
      <Global />
      <TabStrip>
        <ViewButton><ViewIcon /></ViewButton>
        <Tab $w={330} $ml={6}>
          <Streamlit />
          <TabTitle><Label $track={-0.36}>netflix_home · Streamlit</Label></TabTitle>
          <CloseX />
        </Tab>
        <Tab $w={329} $ml={7}>
          <TabTitle $fade><Label $track={-0.28}>cdn.discordapp.com/attachments/12</Label></TabTitle>
          <CloseX />
        </Tab>
        <Tab $w={332} $ml={9} $pr={18} $active>
          <Streamlit />
          <TabTitle><Label $track={-0.36}>netflix_home · Streamlit</Label></TabTitle>
          <CloseX />
        </Tab>
        <Tab $w={330} $ml={6} $pr={17}>
          <Colab />
          <TabTitle><Label $track={-0.24}>Helmet_detection.ipynb - Colab</Label></TabTitle>
          <CloseX />
        </Tab>
        <StripButton $w={48} $ml={9}>
          <svg width="18" height="18" viewBox="0 0 18 18" stroke={ink} strokeWidth="1.800"><path d="M9 0v18M0 9h18" /></svg>
        </StripButton>
        <StripButton $w={48} $ml={129}><Chevron w={18} h={10} c={ink} /></StripButton>
        <StripButton $w={70} $ml={67}>
          <svg width="15" height="2" viewBox="0 0 15 2"><path d="M0 0h15v1.500H0z" fill="#15141a" /></svg>
        </StripButton>
        <StripButton $w={69}>
          <svg width="15" height="15" viewBox="0 0 15 15" fill="none" stroke="#15141a" strokeWidth="1.400">
            <path d="M.7 3.700h10.600v10.600H.7zM3.700 3.700V.7h10.600v10.600h-3" />
          </svg>
        </StripButton>
        <StripButton $w={69}><CloseX s={16} w={1.400} /></StripButton>
      </TabStrip>

      <NavBar>
        <NavButton><Arrow /></NavButton>
        <NavButton><Arrow flip /></NavButton>
        <NavButton><Reload /></NavButton>
        <UrlBar>
          <UrlIcon $w={26}><Shield /></UrlIcon>
          <UrlIcon $w={56}><PageIcon /></UrlIcon>
          <Url>localhost<Dim>:8501</Dim></Url>
          <ZoomBadge><Label $size={16} $track={-0.5}>80%</Label></ZoomBadge>
          <Star />
        </UrlBar>
        <NavRight>
          <NavButton><Pocket /></NavButton>
          <NavButton><Download /></NavButton>
          <NavButton><Account /></NavButton>
          <NavButton><Puzzle /></NavButton>
          <NavButton><Burger /></NavButton>
        </NavRight>
      </NavBar>

      <Bookmarks>
        {bookmarks.map((b) => (
          <Bookmark key={b.name} $w={b.w}>
            <IconBox>{b.icon}</IconBox>
            <Label $track={b.track}>{b.name}</Label>
          </Bookmark>
        ))}
      </Bookmarks>

      <Page>
        <Decoration />
        <PageHeader>
          <span>Deploy</span>
          <svg width="5" height="17" viewBox="0 0 5 17" fill="#31333f">
            <circle cx="2.500" cy="2.300" r="2" /><circle cx="2.500" cy="8.500" r="2" /><circle cx="2.500" cy="14.700" r="2" />
          </svg>
        </PageHeader>
        <Content>
          <Title>Next Word Prediction</Title>
          <FieldLabel>Input text</FieldLabel>
          <Field>data</Field>
          <Button>Predict</Button>
          <Lines>
            {lines.map((l) => <Line key={l}>{l}</Line>)}
          </Lines>
        </Content>
      </Page>

      <Taskbar>
        <Start><Windows /></Start>
        <SearchBox>
          <SearchIcon />
          <Label $size={20.500} $track={-0.4}>Search</Label>
        </SearchBox>
        <Apps>
          {apps.map((a) => (
            <AppButton key={a.key} $active={a.state === "active"}>
              <Badged>{a.icon}</Badged>
              {a.state && <Indicator $active={a.state === "active"} />}
            </AppButton>
          ))}
        </Apps>
        <Tray>
          <Chevron up w={17} h={10} c="#17181b" />
          <Stack $align="center" $w={48} $ml={24}>
            <Label>ENG</Label>
            <Label>IN</Label>
          </Stack>
          <TrayIcons><Wifi /><Speaker /><Battery /></TrayIcons>
          <Stack $align="flex-end" $w={96} $ml={12} $pb={2}>
            <Label $track={-0.25}>3:19 PM</Label>
            <Label $track={-0.1}>5/23/2024</Label>
          </Stack>
          <Stack $align="center" $w={20} $ml={13}><Bell /></Stack>
        </Tray>
      </Taskbar>
    </Screen>
  );
}
